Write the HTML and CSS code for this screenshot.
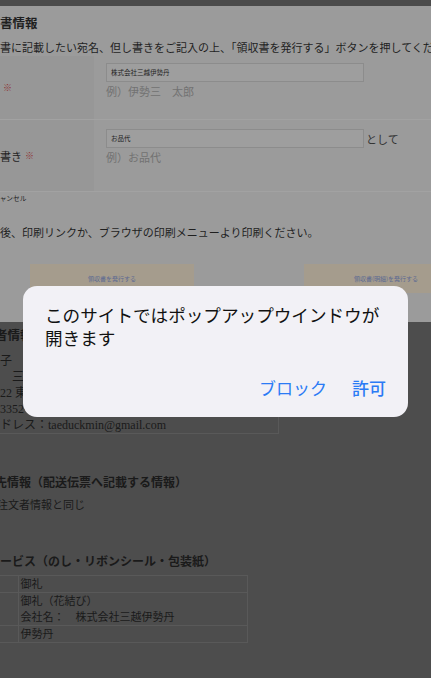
FILE: index.html
```html
<!DOCTYPE html>
<html lang="ja">
<head>
  <meta charset="UTF-8" />
  <meta name="viewport" content="width=device-width, initial-scale=1.0" />
  <title>ご注文内容の確認</title>
  <link rel="stylesheet" href="styles.css">
</head>
<body>
  <div class="receipt">
    <div class="receipt-inner">
      <h2 class="receipt-title">領収書情報</h2>
      <p class="lead">領収書に記載したい宛名、但し書きをご記入の上、「領収書を発行する」ボタンを押してください。</p>

      <div class="form">
        <div class="form-row first">
          <div class="label">宛名<span class="req">※</span></div>
          <div class="value">
            <div class="field"><span class="input">株式会社三越伊勢丹</span></div>
            <div class="hint">例）伊勢三　太郎</div>
          </div>
        </div>
        <div class="form-row second">
          <div class="label">但し書き<span class="req">※</span></div>
          <div class="value">
            <div class="field"><span class="input">お品代</span><span class="suffix">として</span></div>
            <div class="hint">例）お品代</div>
          </div>
        </div>
      </div>

      <a class="cancel">キャンセル</a>
      <p class="note">発行後、印刷リンクか、ブラウザの印刷メニューより印刷ください。</p>

      <div class="actions">
        <button class="issue">領収書を発行する</button>
        <button class="issue">領収書(明細)を発行する</button>
      </div>
    </div>
  </div>

  <div class="order">
    <h3 class="section-title">注文者情報</h3>
    <div class="info">
      <div class="info-line">子</div>
      <div class="info-line">　三越伊勢丹</div>
      <div class="info-line">22 東京都新宿区新宿3-14-1</div>
      <div class="info-line">3352-1111</div>
      <div class="info-line">ドレス：taeduckmin@gmail.com</div>
    </div>

    <h3 class="section-title delivery">配送先情報（配送伝票へ記載する情報）</h3>
    <p class="same">注文者情報と同じ</p>

    <h3 class="section-title gift">ギフトサービス（のし・リボンシール・包装紙）</h3>
    <table class="gift-table">
      <tr><td class="key"></td><td>御礼</td></tr>
      <tr><td class="key"></td><td>御礼（花結び）<br>会社名：　株式会社三越伊勢丹</td></tr>
      <tr><td class="key"></td><td>伊勢丹</td></tr>
    </table>
  </div>

  <div class="alert">
    <p class="alert-text">このサイトではポップアップウインドウが<br>開きます</p>
    <div class="alert-buttons">
      <span class="alert-btn">ブロック</span>
      <span class="alert-btn allow">許可</span>
    </div>
  </div>
</body>
</html>
```

FILE: styles.css
```css
:root {
  --backdrop: #4b4b4b;
  --panel: #9b9b9b;
  --panel-label: #979797;
  --panel-line: #a2a2a2;
  --panel-text: #1f1f1f;
  --hint: #727272;
  --req: #8e3434;
  --tan: #a59c8d;
  --page: #4d4d4d;
  --page-text: #1a1a1a;
  --page-line: #595959;
  --alert-bg: #f2f1f6;
  --blue: #2b7bf5;
}

* {
  margin: 0;
  padding: 0;
  box-sizing: border-box;
}

html, body {
  height: 100%;
}

body {
  background: var(--page);
  font-family: 'Liberation Serif', 'Noto Sans CJK JP', serif;
  color: var(--page-text);
  overflow: hidden;
  border-top: 6px solid var(--backdrop);
}

/* receipt panel */

.receipt {
  height: 316px;
  background: var(--panel);
  color: var(--panel-text);
  overflow: hidden;
  white-space: nowrap;
}

.receipt-inner {
  margin-left: -22px;
  padding-top: 9px;
}

.receipt-title {
  font-size: 12.5px;
  line-height: 18px;
  font-weight: bold;
  text-indent: -3px;
}

.lead {
  font-size: 11px;
  line-height: 16px;
  margin-top: 7px;
}

.form-row {
  display: grid;
  grid-template-columns: 116px 1fr;
  border-bottom: 1px solid var(--panel-line);
}

.form-row.first {
  height: 64px;
}

.form-row.second {
  height: 72px;
}

.label {
  background: var(--panel-label);
  display: flex;
  align-items: center;
  font-size: 11px;
}

.req {
  color: var(--req);
  font-size: 9px;
  margin-left: 3px;
}

.value {
  padding: 7px 0 0 12px;
}

.form-row.second .value {
  padding-top: 9px;
}

.field {
  display: flex;
  align-items: center;
}

.input {
  width: 258px;
  height: 19px;
  border: 1px solid #8c8c8c;
  background: #9e9e9e;
  font-size: 6.5px;
  line-height: 17px;
  padding-left: 4px;
}

.suffix {
  font-size: 11px;
  margin-left: 2px;
  color: #333;
}

.hint {
  font-size: 11px;
  line-height: 18px;
  margin-top: 1px;
  color: var(--hint);
}

.cancel {
  display: block;
  margin-left: 15px;
  font-size: 6.7px;
  line-height: 10px;
  margin-top: 2px;
}

.note {
  font-size: 11px;
  line-height: 16px;
  margin-top: 21px;
}

.actions {
  display: flex;
  gap: 110px;
  margin-top: 23px;
  margin-left: 52px;
}

.issue {
  flex: none;
  width: 164px;
  height: 29px;
  border: none;
  background: var(--tan);
  color: #5d6a92;
  font-family: 'Noto Sans CJK JP', sans-serif;
  font-size: 6px;
}

/* order page below */

.order {
  margin-left: -28px;
  padding-top: 5px;
  white-space: nowrap;
}

.section-title {
  font-size: 12.5px;
  line-height: 18px;
  font-weight: bold;
  text-indent: -2px;
}

.section-title.delivery {
  font-size: 12px;
  margin-top: 40px;
  text-indent: -1px;
}

.section-title.gift {
  font-size: 12px;
  margin-top: 40px;
  text-indent: -20px;
}

.info {
  margin-left: 28px;
  margin-top: 8px;
  width: 279px;
  border-right: 1px solid var(--page-line);
  border-bottom: 1px solid var(--page-line);
  font-size: 12px;
}

.info-line {
  line-height: 16px;
  height: 16px;
}

.same {
  font-size: 11px;
  line-height: 16px;
  margin-top: 5px;
  margin-left: 25px;
}

.gift-table {
  margin-left: 28px;
  margin-top: 4px;
  border-collapse: collapse;
  width: 248px;
  font-size: 11px;
  line-height: 16px;
}

.gift-table td {
  border: 1px solid var(--page-line);
  padding: 0 0 0 2px;
  vertical-align: top;
}

.gift-table td.key {
  width: 18px;
  border-left: none;
}

/* iOS popup alert */

.alert {
  position: fixed;
  left: 23px;
  top: 286px;
  width: 385px;
  height: 131px;
  border-radius: 14px;
  background: var(--alert-bg);
  padding: 17px 22px 0 22px;
  font-family: 'Noto Sans CJK JP', sans-serif;
}

.alert-text {
  font-size: 17.6px;
  line-height: 23px;
  color: #111;
}

.alert-buttons {
  display: flex;
  justify-content: flex-end;
  gap: 25px;
  margin-top: 27px;
}

.alert-btn {
  font-size: 17px;
  line-height: 23px;
  color: var(--blue);
}

.alert-btn.allow {
  font-weight: 500;
}
```
